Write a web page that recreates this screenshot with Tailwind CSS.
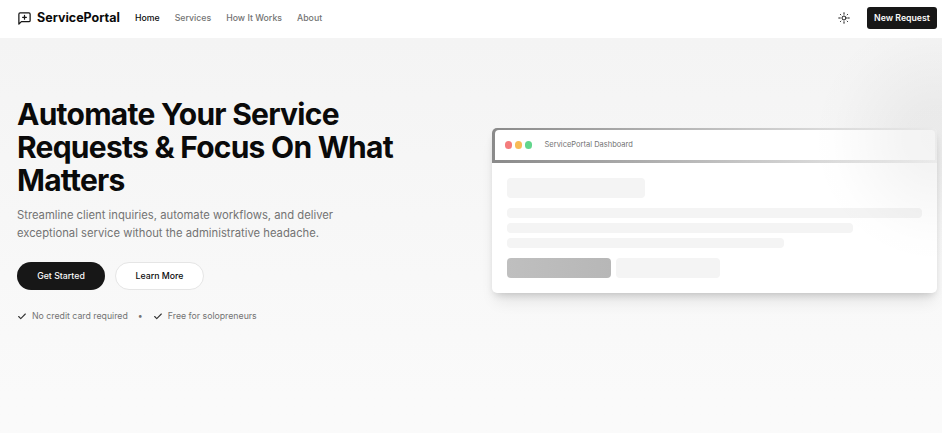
<!DOCTYPE html>
<html lang="en">
<head>
<meta charset="utf-8">
<title>ServicePortal</title>
<script src="https://cdn.jsdelivr.net/npm/@tailwindcss/browser@4"></script>
</head>
<body class="h-[433px] overflow-hidden bg-[#fafafa] font-['Inter',sans-serif] text-[#0a0a0a]">
<header class="flex h-[38px] items-center bg-white pb-[2px] pl-[17px] pr-[5px] whitespace-nowrap">
  <a class="flex w-[118px] items-center gap-[5px]">
    <svg class="size-[15px] shrink-0" viewBox="0 0 24 24" fill="none" stroke="#171717" stroke-width="2" stroke-linecap="round" stroke-linejoin="round"><path d="M21 15a2 2 0 0 1-2 2H7l-4 4V5a2 2 0 0 1 2-2h14a2 2 0 0 1 2 2z"/><path d="M12 7v6M9 10h6"/></svg>
    <span class="text-[12.5px] font-bold">ServicePortal</span>
  </a>
  <nav class="flex items-center gap-[15px] pt-[2px] text-[8.75px] font-medium text-[#737373]">
    <a class="text-[#0a0a0a]">Home</a><a>Services</a><a>How It Works</a><a>About</a>
  </nav>
  <div class="ml-auto flex items-center gap-[17px]">
    <svg class="size-[12px]" viewBox="0 0 24 24" fill="none" stroke="#171717" stroke-width="2" stroke-linecap="round" stroke-linejoin="round"><circle cx="12" cy="12" r="4"/><path d="M12 1.5v3M12 19.5v3M4.93 4.93l.8.8M18.27 18.27l.8.8M1.5 12h3M19.5 12h3M5.73 18.27l-.8.8M19.07 4.93l-.8.8"/></svg>
    <a class="flex h-[22px] w-[70px] items-center justify-center rounded-[3px] bg-[#171717] pt-[2px] text-[8.75px] font-semibold text-[#fafafa]">New Request</a>
  </div>
</header>
<main class="relative flex h-[395px] items-start overflow-hidden bg-linear-to-b from-[#f4f4f4] to-[#fafafa] to-90% pl-[17px] pr-[5px] whitespace-nowrap">
  <section class="w-[475px] shrink-0 pt-[60px]">
    <h1 class="text-[30px] leading-[33px] font-bold tracking-[-0.75px]">Automate Your Service<br>Requests &amp; Focus On What<br>Matters</h1>
    <p class="mt-[9px] text-[11.25px] leading-[18px] text-[#737373]">Streamline client inquiries, automate workflows, and deliver<br>exceptional service without the administrative headache.</p>
    <div class="mt-5 flex gap-[10px] text-[8.75px] font-medium">
      <a class="flex h-7 w-[88px] items-center justify-center rounded-full bg-[#171717] pt-px text-[#fafafa]">Get Started</a>
      <a class="flex h-7 w-[89px] items-center justify-center rounded-full border border-[#e5e5e5] bg-white pt-px">Learn More</a>
    </div>
    <div class="mt-5 flex h-[13px] items-center text-[8.75px] text-[#737373]">
      <svg class="mr-[5px] size-[10px] -translate-y-[0.5px]" viewBox="0 0 24 24" fill="none" stroke="#333333" stroke-width="2.6" stroke-linecap="round" stroke-linejoin="round"><path d="M20 6 9 17l-5-5"/></svg>
      <span>No credit card required</span>
      <span class="w-[25px] text-center">•</span>
      <svg class="mr-[5px] size-[10px] -translate-y-[0.5px]" viewBox="0 0 24 24" fill="none" stroke="#333333" stroke-width="2.6" stroke-linecap="round" stroke-linejoin="round"><path d="M20 6 9 17l-5-5"/></svg>
      <span>Free for solopreneurs</span>
    </div>
  </section>
  <section class="mt-[90px] h-[165px] w-[445px] overflow-hidden rounded-[5px] bg-white shadow-[0_12px_16px_-4px_rgba(0,0,0,0.09),0_4px_8px_-3px_rgba(0,0,0,0.18)]">
    <div class="h-[35px] bg-linear-to-r from-[#8a8a8a] to-[#f6f6f6] pt-[2px] pr-[2px] pb-[3px] pl-[3px]">
      <div class="flex h-[30px] items-center gap-[3px] rounded-t-[4px] bg-white pl-[10px]">
        <i class="h-2 w-[7px] rounded-full bg-[#f47c7c]"></i>
        <i class="h-2 w-[7px] rounded-full bg-[#f8bb55]"></i>
        <i class="h-2 w-[7px] rounded-full bg-[#62d68c]"></i>
        <span class="ml-[9.5px] text-[7.5px] text-[#737373]">ServicePortal Dashboard</span>
      </div>
    </div>
    <div class="px-[15px] pt-[15px]">
      <div class="h-5 w-[138px] rounded-[4px] bg-[#f4f4f4]"></div>
      <div class="mt-[10px] space-y-[5px]">
        <div class="h-[10px] w-[415px] rounded-[4px] bg-[#f4f4f4]"></div>
        <div class="h-[10px] w-[346px] rounded-[4px] bg-[#f4f4f4]"></div>
        <div class="h-[10px] w-[277px] rounded-[4px] bg-[#f4f4f4]"></div>
      </div>
      <div class="mt-[10px] flex gap-[5px]">
        <div class="h-5 w-[104px] rounded-[4px] bg-linear-to-r from-[#bfbfbf] to-[#b7b7b7]"></div>
        <div class="h-5 w-[104px] rounded-[4px] bg-[#f4f4f4]"></div>
      </div>
    </div>
  </section>
  <div class="pointer-events-none absolute -top-[30px] left-[807px] size-[260px] bg-[radial-gradient(closest-side,rgba(0,0,0,0.048)_0%,rgba(0,0,0,0.042)_25%,rgba(0,0,0,0.018)_58%,rgba(0,0,0,0.004)_82%,transparent_100%)]"></div>
</main>
</body>
</html>
